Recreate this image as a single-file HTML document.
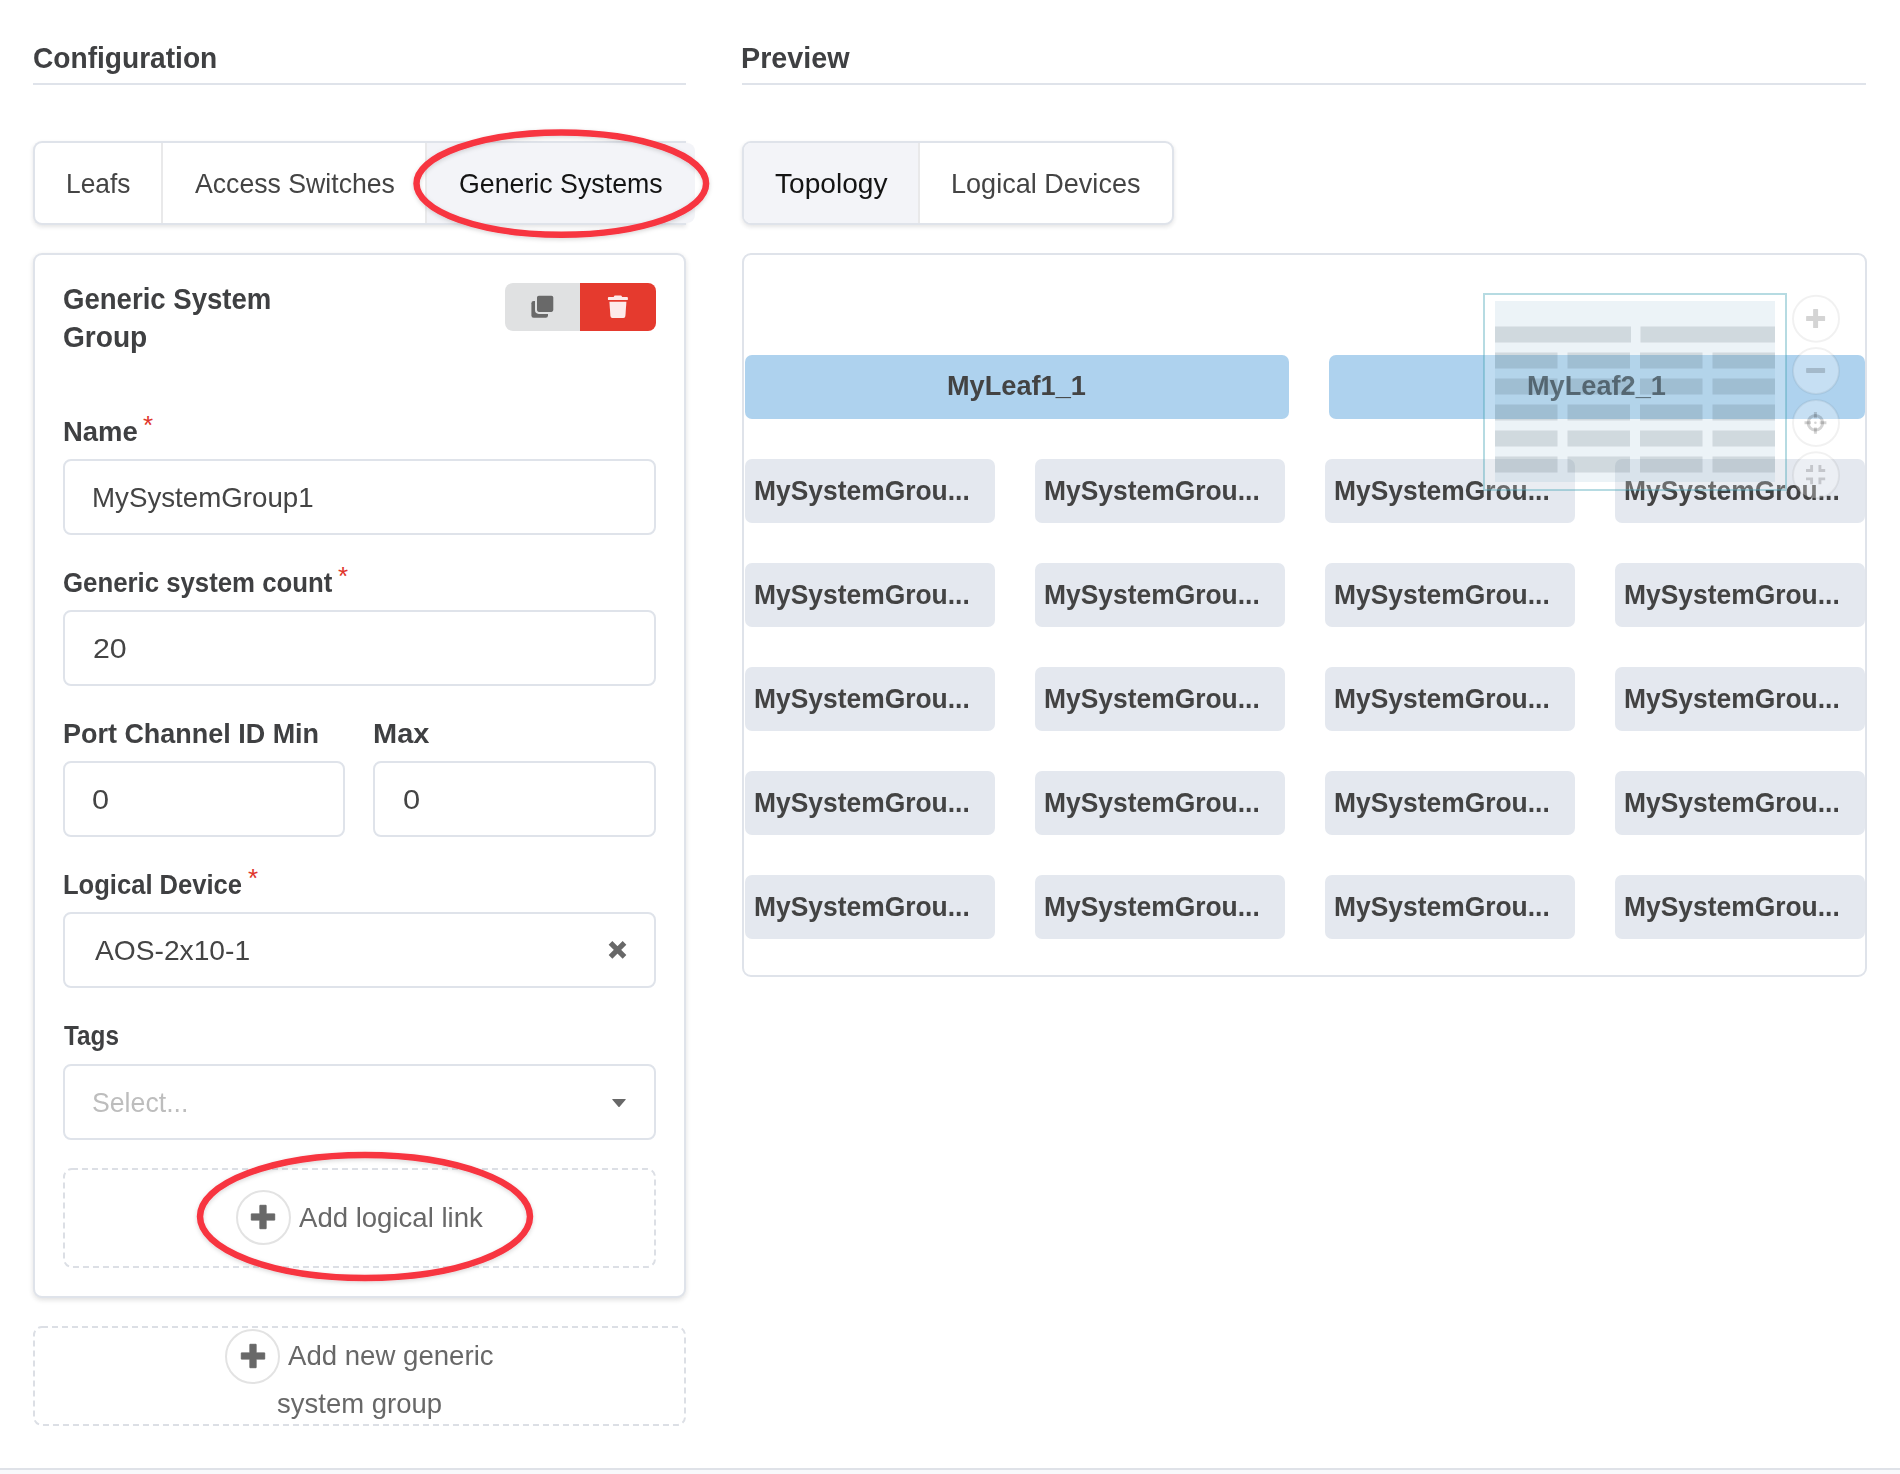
<!DOCTYPE html>
<html lang="en">
<head>
<meta charset="utf-8">
<title>Configuration / Preview</title>
<style>
html,body{margin:0;padding:0;}
body{width:1900px;height:1474px;position:relative;overflow:hidden;background:#fff;
 font-family:"Liberation Sans",sans-serif;color:#3f4042;}
.abs{position:absolute;}
.t{position:absolute;white-space:nowrap;line-height:1;transform-origin:0 0;}
.hr{position:absolute;height:2px;background:#dfe3ea;}
.tabs{position:absolute;box-sizing:border-box;border:2px solid #dfe3ea;border-radius:9px;background:#fff;
 box-shadow:0 2px 4px rgba(34,36,38,.12);height:84px;top:141px;}
.tab{position:absolute;top:0;bottom:0;box-sizing:border-box;}
.tab.act{background:#f3f4f8;}
.tab.sep{border-left:2px solid #e9e9ea;}
.card{position:absolute;box-sizing:border-box;border:2px solid #dfe3ea;border-radius:9px;background:#fff;}
.req{position:absolute;color:#e0352b;font-size:26px;line-height:1;}
.inp{position:absolute;box-sizing:border-box;border:2px solid #dfe3ea;border-radius:8px;background:#fff;height:76px;}
.circ{position:absolute;box-sizing:border-box;border:2px solid #e3e3e3;border-radius:50%;background:#fff;width:55px;height:55px;}
.node{position:absolute;height:64px;width:250px;border-radius:7px;background:#e4e8ef;}
.leaf{position:absolute;height:64px;border-radius:7px;background:#aed2ee;top:355px;}
</style>
</head>
<body>

<!-- headings -->
<div class="t" style="left:33.0px;top:43.4px;font-size:30px;font-weight:bold;color:#3f4042;transform:scaleX(0.9371);">Configuration</div>
<div class="hr" style="left:33px;top:83px;width:653px;"></div>
<div class="t" style="left:740.9px;top:43.4px;font-size:30px;font-weight:bold;color:#3f4042;transform:scaleX(0.9568);">Preview</div>
<div class="hr" style="left:742px;top:83px;width:1124px;"></div>
<!-- left tabs -->
<div class="tabs" style="left:33px;width:653px;border-right:none;border-radius:9px 0 0 9px;"><div class="tab sep" style="left:126px;width:264px;"></div><div class="tab sep act" style="left:390px;width:270px;border-radius:0 8px 8px 0;"></div></div>
<div class="t" style="left:66.4px;top:169.5px;font-size:28px;color:#444;transform:scaleX(0.9409);">Leafs</div>
<div class="t" style="left:195.3px;top:169.5px;font-size:28px;color:#444;transform:scaleX(0.9517);">Access Switches</div>
<div class="t" style="left:459.0px;top:169.5px;font-size:28px;color:#141414;transform:scaleX(0.9555);">Generic Systems</div>
<svg class="abs" style="left:395px;top:115px;" width="335" height="140" viewBox="395 115 335 140"><defs><filter id="sh" x="-10%" y="-20%" width="120%" height="140%"><feDropShadow dx="0" dy="1.5" stdDeviation="2" flood-color="#000" flood-opacity="0.16"/></filter></defs><ellipse cx="561.3" cy="183.6" rx="144.8" ry="51.2" fill="none" stroke="#f73441" stroke-width="6.5" filter="url(#sh)"/></svg>
<!-- right tabs -->
<div class="tabs" style="left:742px;width:432px;"><div class="tab act" style="left:0;width:174px;border-radius:7px 0 0 7px;"></div><div class="tab sep" style="left:174px;width:254px;"></div></div>
<div class="t" style="left:775.0px;top:169.5px;font-size:28px;color:#141414;transform:scaleX(1.0036);">Topology</div>
<div class="t" style="left:951.3px;top:169.5px;font-size:28px;color:#444;transform:scaleX(0.9663);">Logical Devices</div>
<!-- card -->
<div class="card" style="left:33px;top:253px;width:653px;height:1045px;box-shadow:0 2px 5px rgba(34,36,38,.14);"></div>
<div class="t" style="left:62.7px;top:284.0px;font-size:30px;font-weight:bold;color:#3f4042;transform:scaleX(0.9188);">Generic System</div>
<div class="t" style="left:62.7px;top:322.1px;font-size:30px;font-weight:bold;color:#3f4042;transform:scaleX(0.9364);">Group</div>
<div class="abs" style="left:505px;top:283px;width:75px;height:48px;background:#e0e1e2;border-radius:8px 0 0 8px;"></div>
<div class="abs" style="left:580px;top:283px;width:76px;height:48px;background:#e53a2e;border-radius:0 8px 8px 0;"></div>
<svg class="abs" style="left:525px;top:290px;" width="36" height="34" viewBox="525 290 36 34"><rect x="531.4" y="301" width="16.6" height="16.8" rx="2.2" fill="#696969"/><rect x="536" y="294.8" width="18.3" height="18.1" rx="2.8" fill="#696969" stroke="#e0e1e2" stroke-width="2"/></svg>
<svg class="abs" style="left:600px;top:290px;" width="36" height="34" viewBox="600 290 36 34"><g fill="#fdeaea"><path d="M613.6 297 L614.6 295.6 H621.2 L622.2 297 H627 Q627.9 297 627.9 297.9 V299.2 Q627.9 300.1 627 300.1 H608.8 Q607.9 300.1 607.9 299.2 V297.9 Q607.9 297 608.8 297 Z"/><path d="M609.4 301.7 H626.4 L625.4 316 Q625.2 317.9 623.4 317.9 H612.4 Q610.6 317.9 610.4 316 Z"/></g></svg>
<div class="t" style="left:62.7px;top:417.8px;font-size:28px;font-weight:bold;color:#3f4042;transform:scaleX(0.9808);">Name</div>
<div class="req" style="left:143.0px;top:411.7px;">*</div>
<div class="inp" style="left:63px;top:459px;width:593px;"></div>
<div class="t" style="left:92.4px;top:484.0px;font-size:28px;color:#444;transform:scaleX(0.9891);">MySystemGroup1</div>
<div class="t" style="left:63.1px;top:568.9px;font-size:28px;font-weight:bold;color:#3f4042;transform:scaleX(0.9206);">Generic system count</div>
<div class="req" style="left:338.0px;top:562.6px;">*</div>
<div class="inp" style="left:63px;top:610px;width:593px;"></div>
<div class="t" style="left:92.7px;top:635.1px;font-size:28px;color:#444;transform:scaleX(1.0828);">20</div>
<div class="t" style="left:62.8px;top:720.1px;font-size:28px;font-weight:bold;color:#3f4042;transform:scaleX(0.9626);">Port Channel ID Min</div>
<div class="t" style="left:372.6px;top:720.1px;font-size:28px;font-weight:bold;color:#3f4042;transform:scaleX(1.0346);">Max</div>
<div class="inp" style="left:63px;top:761px;width:282px;"></div>
<div class="inp" style="left:373px;top:761px;width:283px;"></div>
<div class="t" style="left:92.3px;top:785.7px;font-size:28px;color:#444;transform:scaleX(1.0929);">0</div>
<div class="t" style="left:402.9px;top:785.7px;font-size:28px;color:#444;transform:scaleX(1.1000);">0</div>
<div class="t" style="left:62.9px;top:871.1px;font-size:28px;font-weight:bold;color:#3f4042;transform:scaleX(0.9130);">Logical Device</div>
<div class="req" style="left:248.0px;top:864.7px;">*</div>
<div class="inp" style="left:63px;top:912px;width:593px;"></div>
<div class="t" style="left:95.0px;top:937.3px;font-size:28px;color:#444;transform:scaleX(1.0065);">AOS-2x10-1</div>
<svg class="abs" style="left:604px;top:936px;" width="28" height="28" viewBox="604 936 28 28"><path d="M610.5 942.9 L624.5 956.9 M624.5 942.9 L610.5 956.9" stroke="#686868" stroke-width="5.2" stroke-linecap="butt" fill="none"/></svg>
<div class="t" style="left:63.7px;top:1021.7px;font-size:28px;font-weight:bold;color:#3f4042;transform:scaleX(0.8677);">Tags</div>
<div class="inp" style="left:63px;top:1064px;width:593px;"></div>
<div class="t" style="left:92.1px;top:1089.1px;font-size:28px;color:#bdbdbd;transform:scaleX(0.9526);">Select...</div>
<svg class="abs" style="left:608px;top:1094px;" width="24" height="18" viewBox="608 1094 24 18"><path d="M612.8 1099 H625.2 Q626.3 1099 625.6 1099.8 L619.6 1106.7 Q619 1107.3 618.4 1106.7 L612.4 1099.8 Q611.7 1099 612.8 1099 Z" fill="#686868"/></svg>
<svg class="abs" style="left:0;top:1140px;" width="760" height="300" viewBox="0 1140 760 300"><rect x="64" y="1169" width="591" height="98" rx="8" fill="none" stroke="#dcdfe5" stroke-width="2" stroke-dasharray="6 4"/><rect x="34" y="1327" width="651" height="98" rx="8" fill="none" stroke="#dcdfe5" stroke-width="2" stroke-dasharray="6 4"/></svg>
<div class="circ" style="left:236px;top:1190px;"></div>
<svg class="abs" style="left:247.3px;top:1201.4px;" width="32" height="32" viewBox="-16 -16 32 32"><path d="M-3.1 -11.7 H3.1 V-3.1 H11.7 V3.1 H3.1 V11.7 H-3.1 V3.1 H-11.7 V-3.1 H-3.1 Z" fill="#686868" stroke="#686868" stroke-width="1" stroke-linejoin="round"/></svg>
<div class="t" style="left:299.0px;top:1203.9px;font-size:28px;color:#686868;transform:scaleX(0.9840);">Add logical link</div>
<svg class="abs" style="left:180px;top:1135px;" width="375" height="165" viewBox="180 1135 375 165"><ellipse cx="365" cy="1216.5" rx="165" ry="61.5" fill="none" stroke="#f73441" stroke-width="6.5" filter="url(#sh)"/></svg>
<!-- add group -->
<div class="circ" style="left:225px;top:1329px;"></div>
<svg class="abs" style="left:237px;top:1339.5px;" width="32" height="32" viewBox="-16 -16 32 32"><path d="M-3.1 -11.7 H3.1 V-3.1 H11.7 V3.1 H3.1 V11.7 H-3.1 V3.1 H-11.7 V-3.1 H-3.1 Z" fill="#686868" stroke="#686868" stroke-width="1" stroke-linejoin="round"/></svg>
<div class="t" style="left:288.4px;top:1341.9px;font-size:28px;color:#686868;transform:scaleX(0.9856);">Add new generic</div>
<div class="t" style="left:276.8px;top:1389.5px;font-size:28px;color:#686868;transform:scaleX(0.9819);">system group</div>
<!-- preview -->
<div class="card" style="left:742px;top:253px;width:1125px;height:724px;"></div>
<div class="leaf" style="left:745px;width:544px;"></div>
<div class="leaf" style="left:1329px;width:536px;"></div>
<div class="t" style="left:946.5px;top:372.2px;font-size:28px;font-weight:bold;color:#434343;transform:scaleX(0.9700);">MyLeaf1_1</div>
<div class="node" style="left:745px;top:459px;"></div>
<div class="t" style="left:754.0px;top:476.7px;font-size:28px;font-weight:bold;color:#434343;transform:scaleX(0.9431);">MySystemGrou...</div>
<div class="node" style="left:1035px;top:459px;"></div>
<div class="t" style="left:1044.0px;top:476.7px;font-size:28px;font-weight:bold;color:#434343;transform:scaleX(0.9431);">MySystemGrou...</div>
<div class="node" style="left:1325px;top:459px;"></div>
<div class="t" style="left:1334.0px;top:476.7px;font-size:28px;font-weight:bold;color:#434343;transform:scaleX(0.9431);">MySystemGrou...</div>
<div class="node" style="left:1615px;top:459px;"></div>
<div class="t" style="left:1624.0px;top:476.7px;font-size:28px;font-weight:bold;color:#434343;transform:scaleX(0.9431);">MySystemGrou...</div>
<div class="node" style="left:745px;top:563px;"></div>
<div class="t" style="left:754.0px;top:580.7px;font-size:28px;font-weight:bold;color:#434343;transform:scaleX(0.9431);">MySystemGrou...</div>
<div class="node" style="left:1035px;top:563px;"></div>
<div class="t" style="left:1044.0px;top:580.7px;font-size:28px;font-weight:bold;color:#434343;transform:scaleX(0.9431);">MySystemGrou...</div>
<div class="node" style="left:1325px;top:563px;"></div>
<div class="t" style="left:1334.0px;top:580.7px;font-size:28px;font-weight:bold;color:#434343;transform:scaleX(0.9431);">MySystemGrou...</div>
<div class="node" style="left:1615px;top:563px;"></div>
<div class="t" style="left:1624.0px;top:580.7px;font-size:28px;font-weight:bold;color:#434343;transform:scaleX(0.9431);">MySystemGrou...</div>
<div class="node" style="left:745px;top:667px;"></div>
<div class="t" style="left:754.0px;top:684.7px;font-size:28px;font-weight:bold;color:#434343;transform:scaleX(0.9431);">MySystemGrou...</div>
<div class="node" style="left:1035px;top:667px;"></div>
<div class="t" style="left:1044.0px;top:684.7px;font-size:28px;font-weight:bold;color:#434343;transform:scaleX(0.9431);">MySystemGrou...</div>
<div class="node" style="left:1325px;top:667px;"></div>
<div class="t" style="left:1334.0px;top:684.7px;font-size:28px;font-weight:bold;color:#434343;transform:scaleX(0.9431);">MySystemGrou...</div>
<div class="node" style="left:1615px;top:667px;"></div>
<div class="t" style="left:1624.0px;top:684.7px;font-size:28px;font-weight:bold;color:#434343;transform:scaleX(0.9431);">MySystemGrou...</div>
<div class="node" style="left:745px;top:771px;"></div>
<div class="t" style="left:754.0px;top:788.7px;font-size:28px;font-weight:bold;color:#434343;transform:scaleX(0.9431);">MySystemGrou...</div>
<div class="node" style="left:1035px;top:771px;"></div>
<div class="t" style="left:1044.0px;top:788.7px;font-size:28px;font-weight:bold;color:#434343;transform:scaleX(0.9431);">MySystemGrou...</div>
<div class="node" style="left:1325px;top:771px;"></div>
<div class="t" style="left:1334.0px;top:788.7px;font-size:28px;font-weight:bold;color:#434343;transform:scaleX(0.9431);">MySystemGrou...</div>
<div class="node" style="left:1615px;top:771px;"></div>
<div class="t" style="left:1624.0px;top:788.7px;font-size:28px;font-weight:bold;color:#434343;transform:scaleX(0.9431);">MySystemGrou...</div>
<div class="node" style="left:745px;top:875px;"></div>
<div class="t" style="left:754.0px;top:892.7px;font-size:28px;font-weight:bold;color:#434343;transform:scaleX(0.9431);">MySystemGrou...</div>
<div class="node" style="left:1035px;top:875px;"></div>
<div class="t" style="left:1044.0px;top:892.7px;font-size:28px;font-weight:bold;color:#434343;transform:scaleX(0.9431);">MySystemGrou...</div>
<div class="node" style="left:1325px;top:875px;"></div>
<div class="t" style="left:1334.0px;top:892.7px;font-size:28px;font-weight:bold;color:#434343;transform:scaleX(0.9431);">MySystemGrou...</div>
<div class="node" style="left:1615px;top:875px;"></div>
<div class="t" style="left:1624.0px;top:892.7px;font-size:28px;font-weight:bold;color:#434343;transform:scaleX(0.9431);">MySystemGrou...</div>
<svg class="abs" style="left:1470px;top:280px;" width="420" height="230" viewBox="1470 280 420 230">
<rect x="1484" y="294" width="302" height="196" fill="#fff" fill-opacity="0.22" stroke="#40a0b4" stroke-opacity="0.38" stroke-width="2"/>
<rect x="1495" y="301" width="280" height="181" fill="#64a0be" fill-opacity="0.12"/>
<rect x="1495" y="326.5" width="136" height="16" fill="#1e323c" fill-opacity="0.135"/>
<rect x="1640.5" y="326.5" width="134.5" height="16" fill="#1e323c" fill-opacity="0.135"/>
<rect x="1495" y="352.5" width="62.5" height="16" fill="#1e323c" fill-opacity="0.135"/>
<rect x="1567.5" y="352.5" width="62.5" height="16" fill="#1e323c" fill-opacity="0.135"/>
<rect x="1640" y="352.5" width="62.5" height="16" fill="#1e323c" fill-opacity="0.135"/>
<rect x="1712.5" y="352.5" width="62.5" height="16" fill="#1e323c" fill-opacity="0.135"/>
<rect x="1495" y="378.5" width="62.5" height="16" fill="#1e323c" fill-opacity="0.135"/>
<rect x="1567.5" y="378.5" width="62.5" height="16" fill="#1e323c" fill-opacity="0.135"/>
<rect x="1640" y="378.5" width="62.5" height="16" fill="#1e323c" fill-opacity="0.135"/>
<rect x="1712.5" y="378.5" width="62.5" height="16" fill="#1e323c" fill-opacity="0.135"/>
<rect x="1495" y="404.5" width="62.5" height="16" fill="#1e323c" fill-opacity="0.135"/>
<rect x="1567.5" y="404.5" width="62.5" height="16" fill="#1e323c" fill-opacity="0.135"/>
<rect x="1640" y="404.5" width="62.5" height="16" fill="#1e323c" fill-opacity="0.135"/>
<rect x="1712.5" y="404.5" width="62.5" height="16" fill="#1e323c" fill-opacity="0.135"/>
<rect x="1495" y="430.5" width="62.5" height="16" fill="#1e323c" fill-opacity="0.135"/>
<rect x="1567.5" y="430.5" width="62.5" height="16" fill="#1e323c" fill-opacity="0.135"/>
<rect x="1640" y="430.5" width="62.5" height="16" fill="#1e323c" fill-opacity="0.135"/>
<rect x="1712.5" y="430.5" width="62.5" height="16" fill="#1e323c" fill-opacity="0.135"/>
<rect x="1495" y="456.5" width="62.5" height="16" fill="#1e323c" fill-opacity="0.135"/>
<rect x="1567.5" y="456.5" width="62.5" height="16" fill="#1e323c" fill-opacity="0.135"/>
<rect x="1640" y="456.5" width="62.5" height="16" fill="#1e323c" fill-opacity="0.135"/>
<rect x="1712.5" y="456.5" width="62.5" height="16" fill="#1e323c" fill-opacity="0.135"/>
<g fill="#fff" fill-opacity="0.3" stroke="#000" stroke-opacity="0.055" stroke-width="2"><circle cx="1816" cy="318.7" r="23"/><circle cx="1816" cy="371" r="23"/><circle cx="1816" cy="423" r="23"/><circle cx="1816" cy="475.3" r="23"/></g>
<g fill="#000" fill-opacity="0.17"><path d="M1813.1 309.6 Q1813.1 309 1813.7 309 H1817.5 Q1818.1 309 1818.1 309.6 V316 H1824.5 Q1825.1 316 1825.1 316.6 V320.4 Q1825.1 321 1824.5 321 H1818.1 V327.4 Q1818.1 328 1817.5 328 H1813.7 Q1813.1 328 1813.1 327.4 V321 H1806.7 Q1806.1 321 1806.1 320.4 V316.6 Q1806.1 316 1806.7 316 H1813.1 Z"/><rect x="1806.1" y="368" width="19" height="5" rx="0.7"/><circle cx="1815.4" cy="422.8" r="1.3"/></g>
<g stroke="#000" stroke-opacity="0.17" stroke-width="3" fill="none"><circle cx="1815.4" cy="422.8" r="7.3"/><path d="M1815.4 412 V418.2 M1815.4 427.4 V433.8 M1804.5 422.8 H1811 M1819.8 422.8 H1826.4"/></g><g stroke="#000" stroke-opacity="0.17" stroke-width="2.9" fill="none"><path d="M1811.6 465 V470.5 H1806 M1819.9 465 V470.5 H1825.2 M1811.6 484.3 V478.9 H1806 M1819.9 484.3 V478.9 H1825.2"/></g>
</svg>
<div class="t" style="left:1526.5px;top:372.2px;font-size:28px;font-weight:bold;color:rgba(38,48,54,0.62);transform:scaleX(0.9700);">MyLeaf2_1</div>
<!-- footer line -->
<div class="abs" style="left:0;top:1468px;width:1900px;height:2px;background:#dfe2e8;"></div>
<div class="abs" style="left:0;top:1470px;width:1900px;height:4px;background:#f8f9fb;"></div>

</body>
</html>
